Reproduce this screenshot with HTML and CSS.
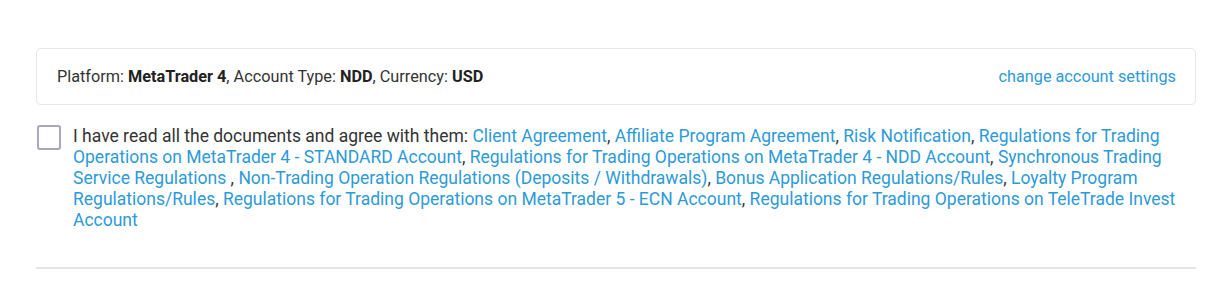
FILE: index.html
```html
<!DOCTYPE html>
<html lang="en">
<head>
  <meta charset="UTF-8">
  <title>Account confirmation</title>
  <link rel="stylesheet" href="styles.css">
</head>
<body>

  <div class="wrap">
    <!-- account summary -->
    <div class="summary">
      <div class="summary-text">
        Platform: <b>MetaTrader 4</b>, Account Type: <b>NDD</b>, Currency: <b>USD</b>
      </div>
      <a href="#" class="summary-link">change account settings</a>
    </div>

    <!-- agreement -->
    <label class="agree">
      <span class="check"></span>
      <span class="agree-text">I have read all the documents and agree with them:
        <a href="#">Client Agreement</a>,
        <a href="#">Affiliate Program Agreement</a>,
        <a href="#">Risk Notification</a>,
        <a href="#">Regulations for Trading Operations on MetaTrader 4 - STANDARD Account</a>,
        <a href="#">Regulations for Trading Operations on MetaTrader 4 - NDD Account</a>,
        <a href="#">Synchronous Trading Service Regulations </a>,
        <a href="#">Non-Trading Operation Regulations (Deposits / Withdrawals)</a>,
        <a href="#">Bonus Application Regulations/Rules</a>,
        <a href="#">Loyalty Program Regulations/Rules</a>,
        <a href="#">Regulations for Trading Operations on MetaTrader 5 - ECN Account</a>,
        <a href="#">Regulations for Trading Operations on TeleTrade Invest Account</a>
      </span>
    </label>

    <div class="divider"></div>
  </div>

</body>
</html>
```

FILE: styles.css
```css
body {
  margin: 0;
  font-family: Roboto, "Liberation Sans", sans-serif;
  background: #fff;
  color: #333;
}

a {
  color: #2d9ad8;
  text-decoration: none;
}

.wrap {
  width: 1160px;
  margin-left: 36px;
  padding-top: 48px;
}

.summary {
  display: flex;
  justify-content: space-between;
  align-items: center;
  height: 57px;
  box-sizing: border-box;
  padding: 0 19px 0 20px;
  border: 1px solid #e6e6e6;
  border-radius: 5px;
  font-size: 16.25px;
}

.summary-text b {
  font-weight: 700;
  color: #222;
}

.agree {
  display: flex;
  align-items: flex-start;
  gap: 12px;
  margin-top: 21px;
  padding-right: 10px;
  cursor: pointer;
}

.check {
  flex: none;
  width: 24px;
  height: 25px;
  box-sizing: border-box;
  border: 2px solid #a8a8b6;
  border-radius: 3px;
  margin-top: -1px;
  margin-left: 1px;
}

.agree-text {
  font-size: 17.5px;
  line-height: 21px;
}

.divider {
  height: 2px;
  background: #e4e4ea;
  margin-top: 36px;
}
```
